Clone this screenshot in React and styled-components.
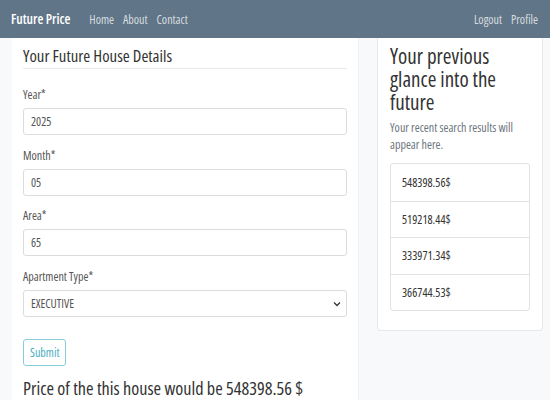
import React from 'react';
import styled, { createGlobalStyle } from 'styled-components';

const GlobalStyle = createGlobalStyle`
  html, body {
    margin: 0;
    padding: 0;
    background: #f8f9fa;
    font-family: "Open Sans", "Noto Sans", sans-serif;
    font-stretch: 75%;
    color: #333;
  }
  * { box-sizing: border-box; }
`;

const Page = styled.div`
  width: 550px;
  height: 400px;
  overflow: hidden;
  background: #f8f9fa;
`;

const NavBar = styled.nav`
  height: 38px;
  background: #607587;
  display: flex;
  align-items: center;
  padding: 0 12px 0 11px;
`;

const Brand = styled.span`
  color: #fff;
  font-size: 13.5px;
  font-weight: 600;
  margin-right: 19px;
`;

const NavLinks = styled.div`
  display: flex;
  gap: 9px;
  margin-left: ${(p) => (p.$right ? 'auto' : '0')};
`;

const NavLink = styled.a`
  color: rgba(255, 255, 255, 0.75);
  font-size: 12px;
  text-decoration: none;
`;

const Body = styled.div`
  display: grid;
  grid-template-columns: 347px 166px;
  column-gap: 18px;
  padding-left: 12px;
  align-items: start;
`;

const FormPanel = styled.section`
  background: #fff;
  border-right: 1px solid #f0f0f0;
  padding: 8px 11px 0 11px;
  height: 362px;
`;

const FormTitle = styled.h2`
  margin: 0;
  font-size: 16.8px;
  line-height: 20px;
  font-weight: 400;
  color: #333;
  padding-bottom: 2px;
  border-bottom: 1px solid #eaeaea;
`;

const Form = styled.form`
  display: flex;
  flex-direction: column;
  padding-top: 18px;
`;

const Field = styled.div`
  display: flex;
  flex-direction: column;
  gap: 5px;
  margin-bottom: 12.5px;
`;

const Label = styled.label`
  font-size: 12px;
  line-height: 16px;
  color: #555;
`;

const Input = styled.input`
  height: 27px;
  border: 1px solid #dcdcdc;
  border-radius: 3px;
  padding: 0 7px;
  font-family: inherit;
  font-stretch: 75%;
  font-size: 12px;
  color: #555;
  outline: none;
`;

const SelectWrap = styled.div`
  position: relative;
  height: 27px;
  border: 1px solid #dcdcdc;
  border-radius: 3px;
  display: flex;
  align-items: center;
  padding: 0 7px;
  font-size: 12px;
  color: #555;
`;

const Chevron = styled.svg`
  position: absolute;
  right: 5px;
  top: 9px;
`;

const SubmitButton = styled.button`
  align-self: flex-start;
  margin-top: 10px;
  height: 27px;
  padding: 0 6px;
  background: #fff;
  border: 1px solid #84cfd9;
  border-radius: 3px;
  color: #4aaebf;
  font-family: inherit;
  font-stretch: 75%;
  font-size: 12px;
`;

const Result = styled.h3`
  margin: 11px 0 0;
  font-size: 18.2px;
  line-height: 22px;
  font-weight: 400;
  color: #333;
  white-space: nowrap;
`;

const HistoryCard = styled.aside`
  background: #fff;
  border: 1px solid #e8e8e8;
  border-top: none;
  border-radius: 0 0 4px 4px;
  padding: 7px 12px 19px;
`;

const HistoryTitle = styled.h2`
  margin: 0;
  font-size: 21px;
  line-height: 23px;
  font-weight: 500;
  color: #333;
`;

const HistoryNote = styled.p`
  margin: 5px 0 10px;
  font-size: 12px;
  line-height: 17px;
  color: #6c757d;
`;

const List = styled.ul`
  list-style: none;
  margin: 0;
  padding: 0;
  border: 1px solid #e3e3e3;
  border-radius: 3px;
`;

const ListItem = styled.li`
  height: 36.5px;
  display: flex;
  align-items: center;
  padding: 0 11px;
  font-size: 12px;
  color: #333;
  border-top: ${(p) => (p.$first ? 'none' : '1px solid #e3e3e3')};
`;

const history = ['548398.56$', '519218.44$', '333971.34$', '366744.53$'];

export default function App() {
  return (
    <Page>
      <GlobalStyle />
      <NavBar>
        <Brand>Future Price</Brand>
        <NavLinks>
          <NavLink href="#">Home</NavLink>
          <NavLink href="#">About</NavLink>
          <NavLink href="#">Contact</NavLink>
        </NavLinks>
        <NavLinks $right>
          <NavLink href="#">Logout</NavLink>
          <NavLink href="#">Profile</NavLink>
        </NavLinks>
      </NavBar>
      <Body>
        <FormPanel>
          <FormTitle>Your Future House Details</FormTitle>
          <Form onSubmit={(e) => e.preventDefault()}>
            <Field>
              <Label>Year*</Label>
              <Input defaultValue="2025" />
            </Field>
            <Field>
              <Label>Month*</Label>
              <Input defaultValue="05" />
            </Field>
            <Field>
              <Label>Area*</Label>
              <Input defaultValue="65" />
            </Field>
            <Field>
              <Label>Apartment Type*</Label>
              <SelectWrap>
                EXECUTIVE
                <Chevron width="8" height="8" viewBox="0 0 16 16">
                  <path d="M2 5l6 6 6-6" fill="none" stroke="#333" strokeWidth="2.5" />
                </Chevron>
              </SelectWrap>
            </Field>
            <SubmitButton type="submit">Submit</SubmitButton>
          </Form>
          <Result>Price of the this house would be 548398.56 $</Result>
        </FormPanel>
        <HistoryCard>
          <HistoryTitle>Your previous glance into the future</HistoryTitle>
          <HistoryNote>Your recent search results will appear here.</HistoryNote>
          <List>
            {history.map((h, i) => (
              <ListItem key={h} $first={i === 0}>{h}</ListItem>
            ))}
          </List>
        </HistoryCard>
      </Body>
    </Page>
  );
}
